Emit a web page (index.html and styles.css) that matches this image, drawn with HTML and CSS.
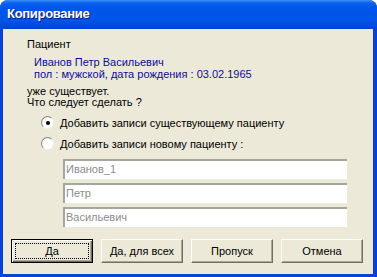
FILE: index.html
```html
<!DOCTYPE html>
<html lang="ru">
<head>
  <meta charset="UTF-8">
  <title>Копирование</title>
  <link rel="stylesheet" href="styles.css">
</head>
<body>

  <div class="ventana">
    <div class="titulo">Копирование</div>

    <div class="contenido">
      <div class="info">
        <div class="linea">Пациент</div>
        <div class="paciente">
          <div>Иванов Петр Васильевич</div>
          <div>пол : мужской, дата рождения : 03.02.1965</div>
        </div>
        <div class="pregunta">
          <div>уже существует.</div>
          <div>Что следует сделать ?</div>
        </div>

        <div class="opciones">
          <label class="opcion">
            <span class="radio checked"></span>
            Добавить записи существующему пациенту
          </label>
          <label class="opcion">
            <span class="radio"></span>
            Добавить записи новому пациенту :
          </label>
        </div>

        <div class="campos">
          <div class="campo">Иванов_1</div>
          <div class="campo">Петр</div>
          <div class="campo">Васильевич</div>
        </div>
      </div>

      <div class="botones">
        <button class="boton default"><span class="foco">Да</span></button>
        <button class="boton">Да, для всех</button>
        <button class="boton">Пропуск</button>
        <button class="boton">Отмена</button>
      </div>
    </div>
  </div>

</body>
</html>
```

FILE: styles.css
```css
:root {
  --color-fondo: #ECE9D8;
  --color-azul-borde: #0841D8;
  --color-texto-azul: #0C0C9C;
  --color-sombra: #ACA899;
  --color-sombra-oscura: #716F64;
}

body {
  margin: 0;
  background: #fff;
  font-family: 'Liberation Sans', Arial, sans-serif;
  font-size: 11px;
  color: #000;
}

.ventana {
  width: 377px;
  height: 277px;
  box-sizing: border-box;
  display: flex;
  flex-direction: column;
  background: var(--color-azul-borde);
  border-radius: 8px 8px 0 0;
  overflow: hidden;
}

/* TITULO */
.titulo {
  height: 29px;
  flex: none;
  box-sizing: border-box;
  padding: 6px 0 0 7px;
  color: #fff;
  font-size: 13px;
  font-weight: bold;
  letter-spacing: -0.3px;
  line-height: 16px;
  text-shadow: 1px 1px #0A1B7A;
  background: linear-gradient(to bottom, #3C8EF7 0, #0A61F0 3px, #0055EA 8px, #0054E8 20px, #0049DB 26px, #0043D0 29px);
}

.contenido {
  flex: 1;
  margin: 0 4px 3px 3px;
  background: var(--color-fondo);
  padding: 9px 8px 0 8px;
  display: flex;
  flex-direction: column;
}

.info {
  padding-left: 16px;
}

.linea {
  line-height: 13px;
}

.paciente {
  margin: 5px 0 0 7px;
  line-height: 12px;
  color: var(--color-texto-azul);
}

.pregunta {
  margin-top: 6px;
  line-height: 11px;
}

/* OPCIONES */
.opciones {
  margin-top: 8px;
  display: flex;
  flex-direction: column;
  gap: 8px;
}

.opcion {
  display: flex;
  align-items: center;
  height: 13px;
  padding-left: 14px;
  gap: 6px;
}

.radio {
  width: 11px;
  height: 11px;
  border-radius: 50%;
  border: 1px solid;
  border-color: #8A877A #F4F3EE #F4F3EE #8A877A;
  background: radial-gradient(circle at 60% 60%, #fff 0, #fff 50%, #E6E3D6 100%);
  display: flex;
  align-items: center;
  justify-content: center;
}

.radio.checked::after {
  content: '';
  width: 4px;
  height: 4px;
  border-radius: 50%;
  background: #000;
}

/* CAMPOS */
.campos {
  margin: 9px 0 0 36px;
  display: flex;
  flex-direction: column;
  gap: 4px;
}

.campo {
  width: 284px;
  height: 20px;
  box-sizing: border-box;
  background: #fff;
  border-top: 2px solid #A7A69E;
  border-left: 2px solid #A7A69E;
  padding: 2px 0 0 1px;
  line-height: 13px;
  color: #8C8C8C;
}

/* BOTONES */
.botones {
  margin-top: 12px;
  display: flex;
  gap: 8px;
}

.boton {
  width: 82px;
  height: 24px;
  box-sizing: border-box;
  padding: 0;
  font-family: inherit;
  font-size: 11px;
  color: #000;
  background: var(--color-fondo);
  border: 1px solid;
  border-color: #fff var(--color-sombra-oscura) var(--color-sombra-oscura) #fff;
  box-shadow: inset -1px -1px var(--color-sombra);
}

.boton.default {
  border: 1px solid #000;
  box-shadow: inset 1px 1px #fff, inset -1px -1px var(--color-sombra-oscura), inset -2px -2px var(--color-sombra);
  padding: 3px;
}

.foco {
  display: flex;
  align-items: center;
  justify-content: center;
  height: 100%;
  box-sizing: border-box;
  border: 1px dotted #000;
}
```
